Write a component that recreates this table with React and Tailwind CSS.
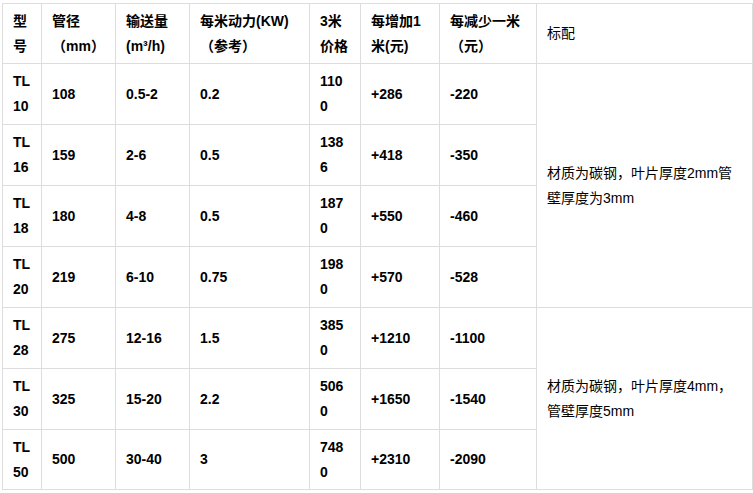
import React from "react";

const rows = [
  ["TL", "10", "108", "0.5-2", "0.2", "110", "0", "+286", "-220"],
  ["TL", "16", "159", "2-6", "0.5", "138", "6", "+418", "-350"],
  ["TL", "18", "180", "4-8", "0.5", "187", "0", "+550", "-460"],
  ["TL", "20", "219", "6-10", "0.75", "198", "0", "+570", "-528"],
  ["TL", "28", "275", "12-16", "1.5", "385", "0", "+1210", "-1100"],
  ["TL", "30", "325", "15-20", "2.2", "506", "0", "+1650", "-1540"],
  ["TL", "50", "500", "30-40", "3", "748", "0", "+2310", "-2090"],
];

const cell = "border border-[#dddddd] px-[10px] align-middle whitespace-nowrap";

export default function App() {
  return (
    <div
      className="bg-white pt-[3px] pl-[2px] text-[14px] leading-[25px] text-black"
      style={{ fontFamily: '"Liberation Sans", Arial, "Noto Sans CJK SC", sans-serif' }}
    >
      <table className="table-fixed border-collapse w-[750px]">
        <colgroup>
          <col className="w-[39px]" />
          <col className="w-[74px]" />
          <col className="w-[74px]" />
          <col className="w-[120px]" />
          <col className="w-[51px]" />
          <col className="w-[79px]" />
          <col className="w-[97px]" />
          <col className="w-[216px]" />
        </colgroup>
        <thead>
          {/* header row */}
          <tr className="h-[60px] font-bold">
            <td className={cell}>型<br />号</td>
            <td className={cell}>管径<br />（mm）</td>
            <td className={cell}>输送量<br />(m³/h)</td>
            <td className={cell}>每米动力(KW)<br />（参考）</td>
            <td className={cell}>3米<br />价格</td>
            <td className={cell}>每增加1<br />米(元)</td>
            <td className={cell}>每减少一米<br />（元）</td>
            <td className={`${cell} font-normal`}>标配</td>
          </tr>
        </thead>
        <tbody>
          {rows.map((r, i) => (
            <tr key={i} className={i === rows.length - 1 ? "h-[60px]" : "h-[61px]"}>
              <td className={`${cell} font-bold`}>{r[0]}<br />{r[1]}</td>
              <td className={`${cell} font-bold`}>{r[2]}</td>
              <td className={`${cell} font-bold`}>{r[3]}</td>
              <td className={`${cell} font-bold`}>{r[4]}</td>
              <td className={`${cell} font-bold`}>{r[5]}<br />{r[6]}</td>
              <td className={`${cell} font-bold`}>{r[7]}</td>
              <td className={`${cell} font-bold`}>{r[8]}</td>
              {/* merged spec cells */}
              {i === 0 && (
                <td rowSpan={4} className={cell}>
                  材质为碳钢，叶片厚度2mm管<br />壁厚度为3mm
                </td>
              )}
              {i === 4 && (
                <td rowSpan={3} className={cell}>
                  材质为碳钢，叶片厚度4mm，<br />管壁厚度5mm
                </td>
              )}
            </tr>
          ))}
        </tbody>
      </table>
    </div>
  );
}
